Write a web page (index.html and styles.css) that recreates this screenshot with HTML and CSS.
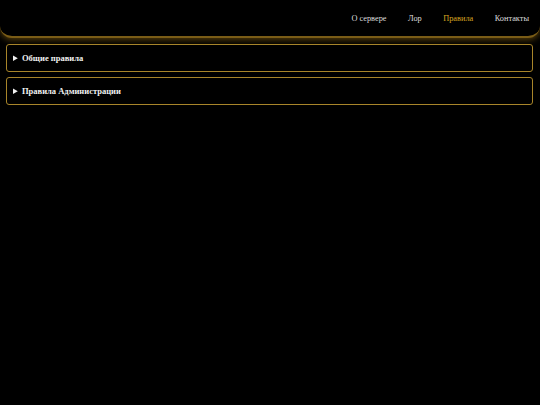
FILE: index.html
```html
<!DOCTYPE html>
<html lang="ru">
<head>
<meta charset="utf-8">
<title>Правила</title>
<link rel="stylesheet" href="styles.css">
</head>
<body>
<header class="site-header">
  <nav class="nav">
    <a class="nav-link" href="#">О сервере</a>
    <a class="nav-link" href="#">Лор</a>
    <a class="nav-link active" href="#">Правила</a>
    <a class="nav-link" href="#">Контакты</a>
  </nav>
</header>
<main class="rules">
  <details class="rule-block">
    <summary class="rule-summary">Общие правила</summary>
  </details>
  <details class="rule-block">
    <summary class="rule-summary">Правила Администрации</summary>
  </details>
</main>
</body>
</html>
```
FILE: styles.css
```css
html, body {
  margin: 0;
  padding: 0;
  background: #000;
  font-family: "Liberation Serif", "Times New Roman", serif;
  color: #e6e6e6;
}
.site-header {
  height: 36px;
  background: #000;
  border-bottom: 2px solid #7a5c16;
  border-radius: 0 0 12px 12px;
  box-shadow: 0 2px 6px rgba(150, 110, 20, 0.55);
  display: flex;
  align-items: center;
  justify-content: flex-end;
  padding: 0 11px 0 0;
}
.nav {
  display: flex;
  gap: 21.5px;
  padding-top: 1px;
}
.nav-link {
  color: #dcdcdc;
  text-decoration: none;
  font-size: 8.3px;
}
.nav-link.active {
  color: #d9a520;
}
.rules {
  display: flex;
  flex-direction: column;
  gap: 5px;
  padding: 6px 7px 0 6px;
}
.rule-block {
  border: 1px solid #a8852a;
  border-radius: 3px;
  padding: 0 6px;
  background: #000;
}
.rule-summary {
  height: 26px;
  line-height: 26px;
  font-weight: bold;
  font-size: 8.5px;
  color: #f0f0f0;
  cursor: pointer;
}
```
